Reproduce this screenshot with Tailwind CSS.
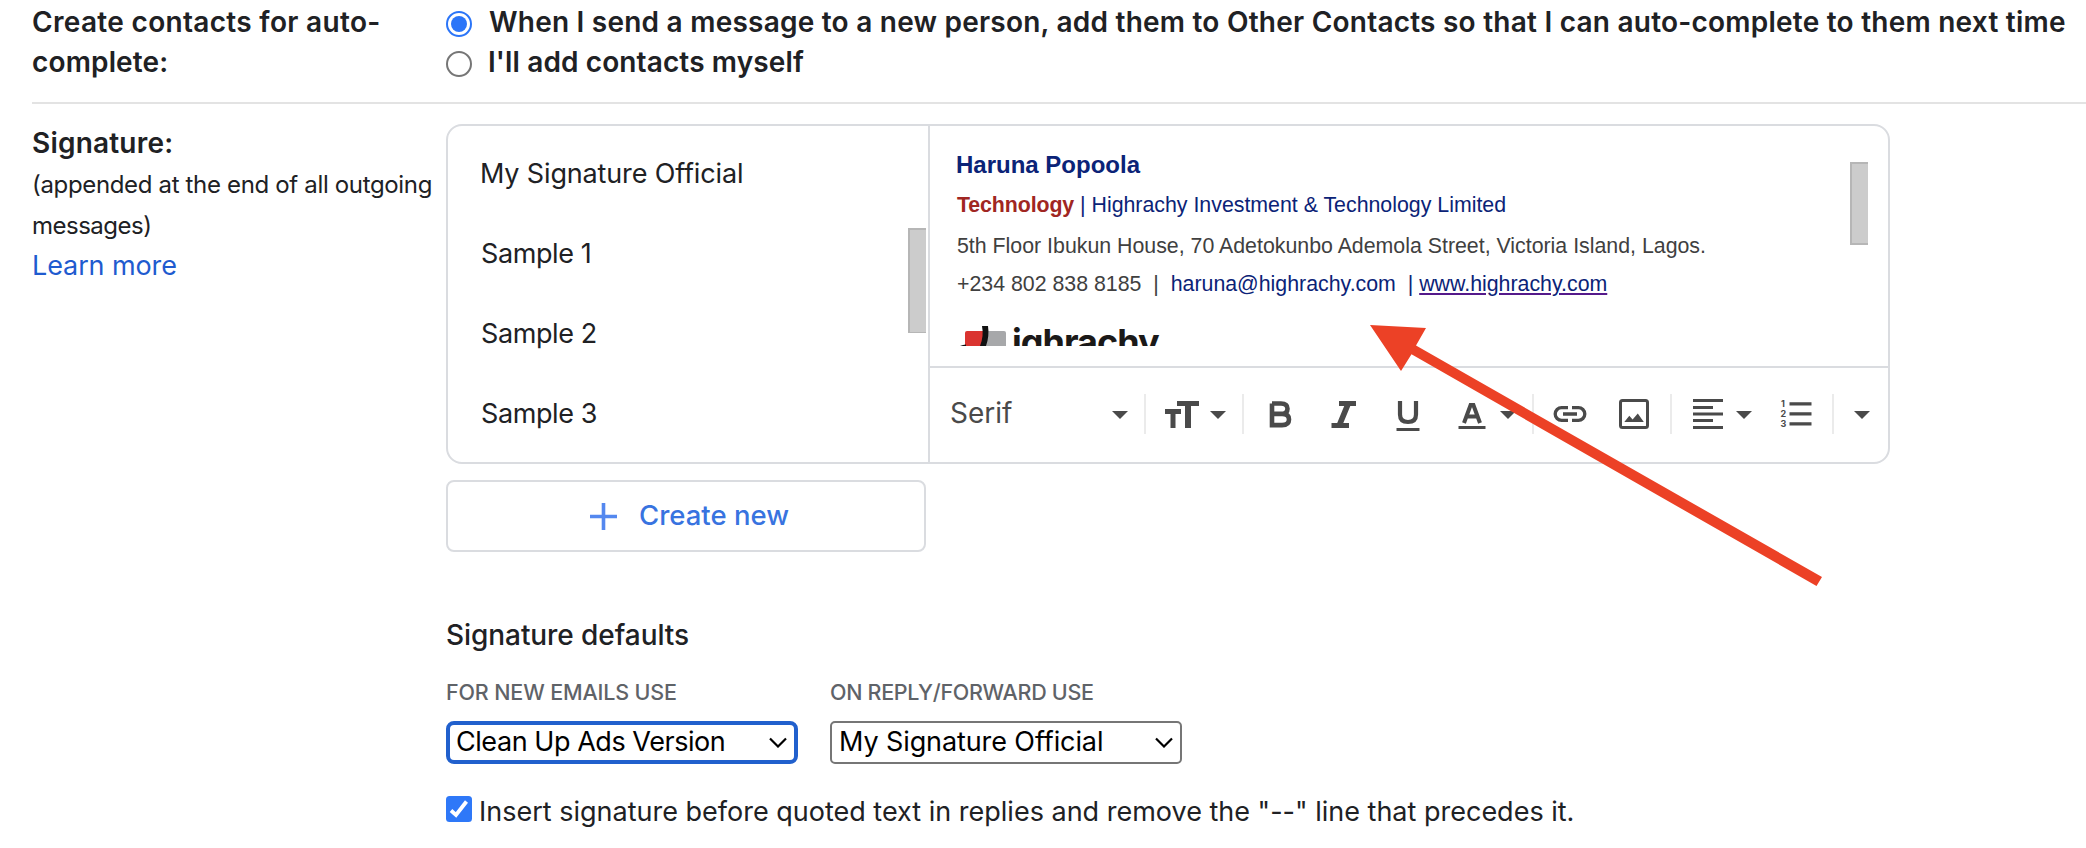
<!DOCTYPE html>
<html lang="en"><head><meta charset="utf-8"><title>Settings</title><script src="https://cdn.jsdelivr.net/npm/@tailwindcss/browser@4"></script></head>
<body class="relative h-[848px] w-[2086px] overflow-hidden bg-white font-[Inter,sans-serif] text-[27px] text-[#202124]">

<!-- Auto-complete contacts -->
<section class="ml-8 flex h-[104px] border-b-2 border-[#e3e3e3] pt-[2px] text-[28px] leading-10 font-semibold">
  <div class="w-[414px] shrink-0 whitespace-nowrap">
    <div class="tracking-[0.32px]">Create contacts for auto-</div>
    <div class="tracking-[0.15px]">complete:</div>
  </div>
  <div class="whitespace-nowrap">
    <label class="flex h-10">
      <span class="mt-[9px] mr-[17px] flex size-[26px] items-center justify-center rounded-full border-2 border-[#2b75f8]"><span class="size-4 rounded-full bg-[#2b75f8]"></span></span>
      <span class="tracking-[0.23px]">When I send a message to a new person, add them to Other Contacts so that I can auto-complete to them next time</span>
    </label>
    <label class="flex h-10">
      <span class="mt-[9px] mr-4 size-[26px] rounded-full border-2 border-[#767676]"></span>
      <span class="tracking-[0.12px]">I'll add contacts myself</span>
    </label>
  </div>
</section>

<!-- Signature -->
<section class="ml-8 flex">
  <div class="w-[414px] shrink-0 pt-[19px] leading-[41px] whitespace-nowrap">
    <div class="text-[28px] font-semibold tracking-[0.2px]">Signature:</div>
    <div class="text-[24px] tracking-[-0.34px]">(appended at the end of all outgoing</div>
    <div class="text-[24px] tracking-[-0.5px]">messages)</div>
    <a class="block leading-[39px] tracking-[-0.1px] text-[#1f5bcf]">Learn more</a>
  </div>

  <div class="pt-5">
    <div class="flex h-[340px] w-[1444px] rounded-2xl border-2 border-[#dadce0]">
      <div class="flex w-[482px] justify-between border-r-2 border-[#dadce0]">
        <ul class="pt-2 pl-8 leading-[80px] whitespace-nowrap">
          <li class="h-20 tracking-[-0.15px]">My Signature Official</li>
          <li class="h-20 pl-px tracking-[-0.4px]">Sample 1</li>
          <li class="h-20 pl-px tracking-[-0.4px]">Sample 2</li>
          <li class="h-20 pl-px tracking-[-0.4px]">Sample 3</li>
        </ul>
        <div class="mt-[102px] mr-[2px] h-[105px] w-[18px] border-t-2 border-b border-l-2 border-[#b6b6b6] bg-[#cccccc]"></div>
      </div>
      <div class="w-[958px]">
        <div class="flex h-[242px] justify-between border-b-2 border-[#dadce0] pr-5">
          <div class="h-[220px] overflow-hidden pt-[19px] pl-[26px] font-['Liberation_Sans',sans-serif] text-[21.33px] leading-10 text-[#0b2377]">
            <div class="h-10 text-[24px] leading-[40px] font-bold whitespace-nowrap">Haruna Popoola</div>
            <div class="h-[41px] pl-px whitespace-nowrap"><b class="tracking-[-0.1px] text-[#a02622]">Technology</b> | Highrachy Investment &amp; Technology Limited</div>
            <div class="h-[38px] pl-px whitespace-nowrap text-[#404040]">5th Floor Ibukun House, 70 Adetokunbo Ademola Street, Victoria Island, Lagos.</div>
            <div class="h-10 pl-px whitespace-nowrap"><span class="text-[#404040]">+234 802 838 8185 &nbsp;| &nbsp;</span>haruna@highrachy.com &nbsp;| <a class="underline decoration-[#551a8b] decoration-2 underline-offset-2">www.highrachy.com</a></div>
            <div class="flex h-[42px] overflow-hidden pt-[22px] text-[#1b1918]">
              <svg class="ml-1 h-5 w-[51px] shrink-0" viewBox="0 0 51 20"><path d="M7 5h16v15H5V7q0-2 2-2z" fill="#da3430"/><path d="M27 5h17q2 0 2 2v13H25z" fill="#a7a8aa"/><path d="M22 0h6q1.500 10-2 20h-6q4-10 2-20zM0 20q3-1.500 6-1.500V20z" fill="#111"/></svg>
              <span class="-mt-[6px] pl-px font-[Inter] text-[36px] leading-[44px] font-bold tracking-[-1px]">ighrachy</span>
            </div>
          </div>
          <div class="mt-9 h-[83px] w-[18px] border-t-2 border-b-2 border-l-2 border-[#b6b6b6] bg-[#cccccc]"></div>
        </div>
        <!-- Formatting toolbar -->
        <div class="flex h-[94px] text-[#4a4a4a]">
          <span class="w-[154px] shrink-0 pl-[20px] text-[28px] leading-[91px]">Serif</span>
          <svg class="h-[94px] w-[804px] shrink-0" viewBox="1084 368 804 94" fill="#4a4a4a">
            <path d="M1112 411h16l-8 8zM1210 411h16l-8 8zM1500 411h16l-8 8zM1736 411h16l-8 8zM1854 411h16l-8 8z"/>
            <path d="M1144 394h2v40h-2zM1242 394h2v40h-2zM1532 394h2v40h-2zM1670 394h2v40h-2zM1832 394h2v40h-2z" fill="#ebebeb"/>
            <path d="M1177 401h22v5h-8v22h-6v-22h-8zM1165 409h16v5h-5.500v14h-5v-14h-5.500z"/>
            <path d="M1272 403.500h9q6.500 0 6.500 5.200t-6.500 5.200h-9m0 0h10q7 0 7 5.600t-7 5.600h-10zV403.500" fill="none" stroke="#4a4a4a" stroke-width="4.600"/>
            <path d="M1339 401h17v5h-5.700l-7 17h5.700v5h-17.500v-5h5.700l7-17h-5.200z"/>
            <path d="M1400 401v13.500q0 7.500 8 7.500t8-7.500V401" fill="none" stroke="#4a4a4a" stroke-width="4.200"/><path d="M1396.500 428h23v3h-23z"/>
            <path d="M1464 423l6.600-18h2.800l6.600 18M1467 416.500h10" fill="none" stroke="#4a4a4a" stroke-width="4"/><path d="M1458.500 426h27v3h-27z"/>
            <path d="M1568 407.600h-6.400a6.400 6.400 0 0 0 0 12.800h6.400M1572 407.600h6.400a6.400 6.400 0 0 1 0 12.800h-6.400M1563 414h14" fill="none" stroke="#4a4a4a" stroke-width="3.300"/>
            <rect x="1620.500" y="400.500" width="27" height="27" rx="2" fill="none" stroke="#4a4a4a" stroke-width="3"/>
            <path d="M1624.300 422l5-6.200 3.300 3.700 5.200-6 6 8.500z"/>
            <path d="M1693 399h30v3h-30zM1693 406h20v3h-20zM1693 412.500h30v3h-30zM1693 419h20v3h-20zM1693 426h30v3h-30zM1789.500 402.200h22v3.400h-22zM1789.500 412.200h22v3.400h-22zM1789.500 422.200h22v3.400h-22z"/>
            <g font-family="Inter" font-weight="700" font-size="9"><text x="1781" y="407.300">1</text><text x="1780.500" y="417.300">2</text><text x="1780.500" y="427.300">3</text></g>
          </svg>
        </div>
      </div>
    </div>

    <button class="mt-4 flex h-[72px] w-[480px] items-center rounded-lg border-2 border-[#dadce0] pl-[141px] text-[27.5px] font-medium text-[#3873e0]">
      <svg class="size-[28px]" viewBox="0 0 28 28"><path d="M14.500 1v27M1 14.500h27" stroke="#5488ef" stroke-width="3.600"/></svg>
      <span class="ml-[22px] whitespace-nowrap">Create new</span>
    </button>

    <h2 class="mt-[63px] text-[28px] leading-10 font-medium tracking-[-0.07px]">Signature defaults</h2>
    <div class="mt-[22px] flex gap-[32px] whitespace-nowrap">
      <div class="w-[352px]">
        <div class="text-[21.5px] leading-[30px] font-medium tracking-[-0.15px] text-[#5f6368]">FOR NEW EMAILS USE</div>
        <div class="mt-[14px] flex h-[43px] items-center justify-between rounded-lg border-4 border-[#2160cd] pr-[7px] pl-[6px] tracking-[-0.45px] text-black">
          Clean Up Ads Version
          <svg class="h-[11px] w-[18px]" viewBox="0 0 18 11"><path d="M1 1.500l8 8 8-8" fill="none" stroke="#000" stroke-width="2.200"/></svg>
        </div>
      </div>
      <div class="w-[352px]">
        <div class="text-[21.5px] leading-[30px] font-medium tracking-[-0.3px] text-[#5f6368]">ON REPLY/FORWARD USE</div>
        <div class="mt-[14px] flex h-[43px] items-center justify-between rounded-[5px] border-2 border-[#767676] pr-[7px] pl-[7px] tracking-[-0.1px] text-black">
          My Signature Official
          <svg class="h-[11px] w-[18px]" viewBox="0 0 18 11"><path d="M1 1.500l8 8 8-8" fill="none" stroke="#000" stroke-width="2.200"/></svg>
        </div>
      </div>
    </div>
    <label class="mt-7 flex h-10 leading-10 whitespace-nowrap">
      <svg class="mt-1 mr-[7px] size-[26px]" viewBox="0 0 26 26"><rect width="26" height="26" rx="3.500" fill="#2e78f8"/><path d="M5 14.500l5 4.500L20.500 5.500" fill="none" stroke="#fff" stroke-width="3.800"/></svg>
      Insert signature before quoted text in replies and remove the "--" line that precedes it.
    </label>
  </div>
</section>

<!-- Annotation arrow -->
<svg class="absolute top-0 left-0 h-[848px] w-[2086px]" viewBox="0 0 2086 848"><path d="M1370 325l56 3-10 17.600L1822 577l-5.500 9L1411.500 354.300 1401 371z" fill="#ec4126"/></svg>
</body></html>
